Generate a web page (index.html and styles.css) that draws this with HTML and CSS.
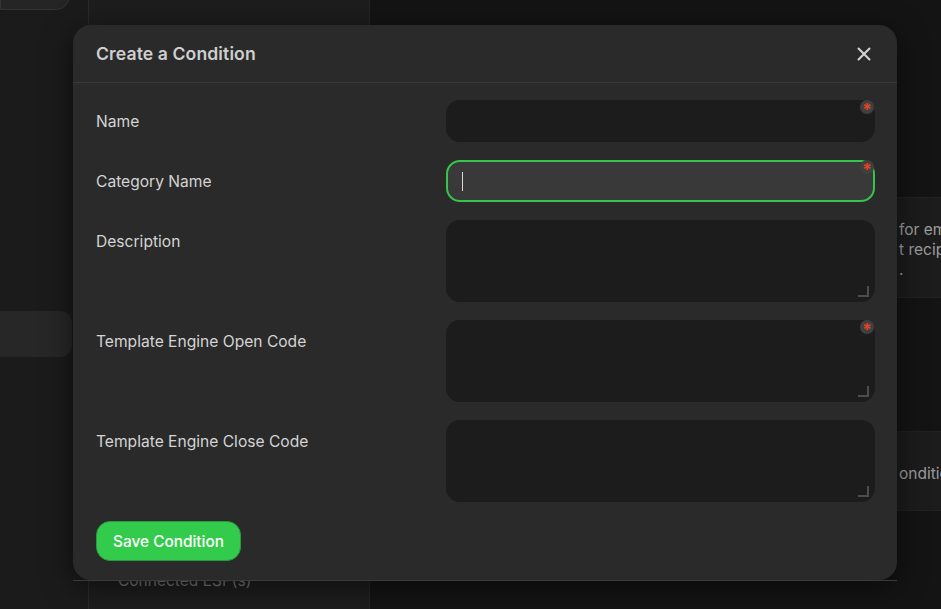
FILE: index.html
```html
<!DOCTYPE html>
<html lang="en">
<head>
<meta charset="utf-8">
<title>Create a Condition</title>
<link rel="stylesheet" href="styles.css">
</head>
<body>
<div class="app">
  <aside class="rail">
    <div class="rail-pill"></div>
    <div class="rail-item"></div>
  </aside>
  <nav class="sidenav">
    <div class="sidenav-spacer"></div>
    <div class="sidenav-link">Connected ESP(s)</div>
  </nav>
  <main class="main">
    <section class="card card-info">
      <p>for emails</p>
      <p>t recipients</p>
      <p>.</p>
    </section>
    <section class="card card-list">
      <p>onditions</p>
    </section>
  </main>
</div>

<div class="modal" role="dialog" aria-labelledby="modal-title">
  <header class="modal-header">
    <h2 id="modal-title" class="modal-title">Create a Condition</h2>
    <button class="modal-close" aria-label="Close">
      <svg viewBox="0 0 14 14" width="14" height="14"><path d="M1.5 1.5 L12.5 12.5 M12.5 1.5 L1.5 12.5" stroke="#d4d4d4" stroke-width="2" stroke-linecap="round" fill="none"/></svg>
    </button>
  </header>
  <form class="modal-body">
    <div class="form-grid">
      <label class="label">Name</label>
      <div class="control">
        <input class="input" type="text">
        <span class="required">*</span>
      </div>

      <label class="label">Category Name</label>
      <div class="control">
        <input class="input input-focus" type="text">
        <span class="caret"></span>
        <span class="required">*</span>
      </div>

      <label class="label">Description</label>
      <div class="control">
        <textarea class="textarea"></textarea>
        <span class="grip"></span>
      </div>

      <label class="label">Template Engine Open Code</label>
      <div class="control">
        <textarea class="textarea"></textarea>
        <span class="grip"></span>
        <span class="required">*</span>
      </div>

      <label class="label">Template Engine Close Code</label>
      <div class="control">
        <textarea class="textarea"></textarea>
        <span class="grip"></span>
      </div>
    </div>
    <button type="button" class="btn-save">Save Condition</button>
  </form>
</div>
</body>
</html>
```

FILE: styles.css
```css
* { box-sizing: border-box; }

html, body {
  margin: 0;
  height: 100%;
  overflow: hidden;
}

body {
  background: #141414;
  font-family: Inter, "Noto Sans", "Liberation Sans", sans-serif;
  color: #d4d4d4;
}

.app {
  display: flex;
  height: 609px;
}

.rail {
  width: 88px;
  flex: none;
  background: #1b1b1b;
  display: flex;
  flex-direction: column;
}

.rail-pill {
  width: 70px;
  height: 34px;
  margin-top: -24px;
  background: #252525;
  border: 1px solid #333;
  border-radius: 0 14px 14px 0;
}

.rail-item {
  width: 72px;
  height: 46px;
  margin-top: 301px;
  background: #272727;
  border-radius: 0 12px 12px 0;
}

.sidenav {
  width: 282px;
  flex: none;
  background: #1d1d1d;
  border-left: 1px solid #2a2a2a;
  border-right: 1px solid #252525;
  display: flex;
  flex-direction: column;
}

.sidenav-spacer { height: 571px; }

.sidenav-link {
  padding-left: 29px;
  font-size: 15.5px;
  line-height: 20px;
  color: #747474;
}

.main {
  flex: 1;
  display: flex;
  flex-direction: column;
  padding-top: 197px;
  gap: 133px;
}

.card {
  background: #1c1c1c;
  border-top: 1px solid #222;
  border-bottom: 1px solid #222;
  padding-left: 529px;
  font-size: 15.5px;
  line-height: 20px;
  color: #9c9c9c;
  white-space: nowrap;
}

.card p { margin: 0; }

.card-info {
  height: 101px;
  padding-top: 22px;
}

.card-list {
  height: 80px;
  padding-top: 32px;
}

/* modal */
.modal {
  position: absolute;
  left: 73px;
  top: 25px;
  width: 824px;
  background: #2a2a2a;
  border-radius: 18px;
  box-shadow: 0 6px 30px rgba(0, 0, 0, 0.55);
}

.modal::after {
  content: "";
  position: absolute;
  left: 0;
  right: 0;
  bottom: -1px;
  height: 1px;
  background: #3a3a3a;
}

.modal-header {
  height: 58px;
  display: flex;
  align-items: center;
  justify-content: space-between;
  padding: 0 26px 0 23px;
  border-bottom: 1px solid #3a3a3a;
}

.modal-title {
  margin: 0;
  font-size: 17.6px;
  font-weight: 600;
  color: #cfcfcf;
  letter-spacing: 0.1px;
}

.modal-close {
  background: none;
  border: 0;
  padding: 0;
  width: 14px;
  height: 14px;
  display: flex;
  margin-top: 1px;
}

.modal-body {
  margin: 0;
  padding: 17px 22px 19px 23px;
}

.form-grid {
  display: grid;
  grid-template-columns: 350px 1fr;
  row-gap: 18px;
}

.label {
  padding-top: 11px;
  font-size: 15.6px;
  line-height: 21px;
  color: #d4d4d4;
}

.control {
  position: relative;
}

.input,
.textarea {
  display: block;
  width: 100%;
  margin: 0;
  border: 0;
  border-radius: 14px;
  background: #1c1c1c;
  color: #ddd;
  font: inherit;
  outline: none;
}

.input { height: 42px; }

.input-focus {
  background: #393939;
  border: 2px solid #36c54b;
}

.textarea {
  height: 82px;
  resize: none;
}

.caret {
  position: absolute;
  left: 16px;
  top: 12px;
  width: 1px;
  height: 19px;
  background: #d8d8d8;
}

.required {
  position: absolute;
  right: 1px;
  top: 0;
  width: 14px;
  height: 14px;
  border-radius: 50%;
  background: #404040;
  color: #e4431f;
  font-size: 17px;
  font-weight: 700;
  line-height: 20px;
  text-align: center;
}

.grip {
  position: absolute;
  right: 6px;
  bottom: 5px;
  width: 11px;
  height: 11px;
  border-right: 2px solid #4d4d4d;
  border-bottom: 2px solid #4d4d4d;
}

.btn-save {
  margin-top: 19px;
  height: 40px;
  padding: 0 16px;
  border: 1px solid #2b9a3e;
  border-radius: 14px;
  background: #33cb4b;
  color: #fff;
  font: inherit;
  font-size: 15.4px;
  font-weight: 500;
}
```
